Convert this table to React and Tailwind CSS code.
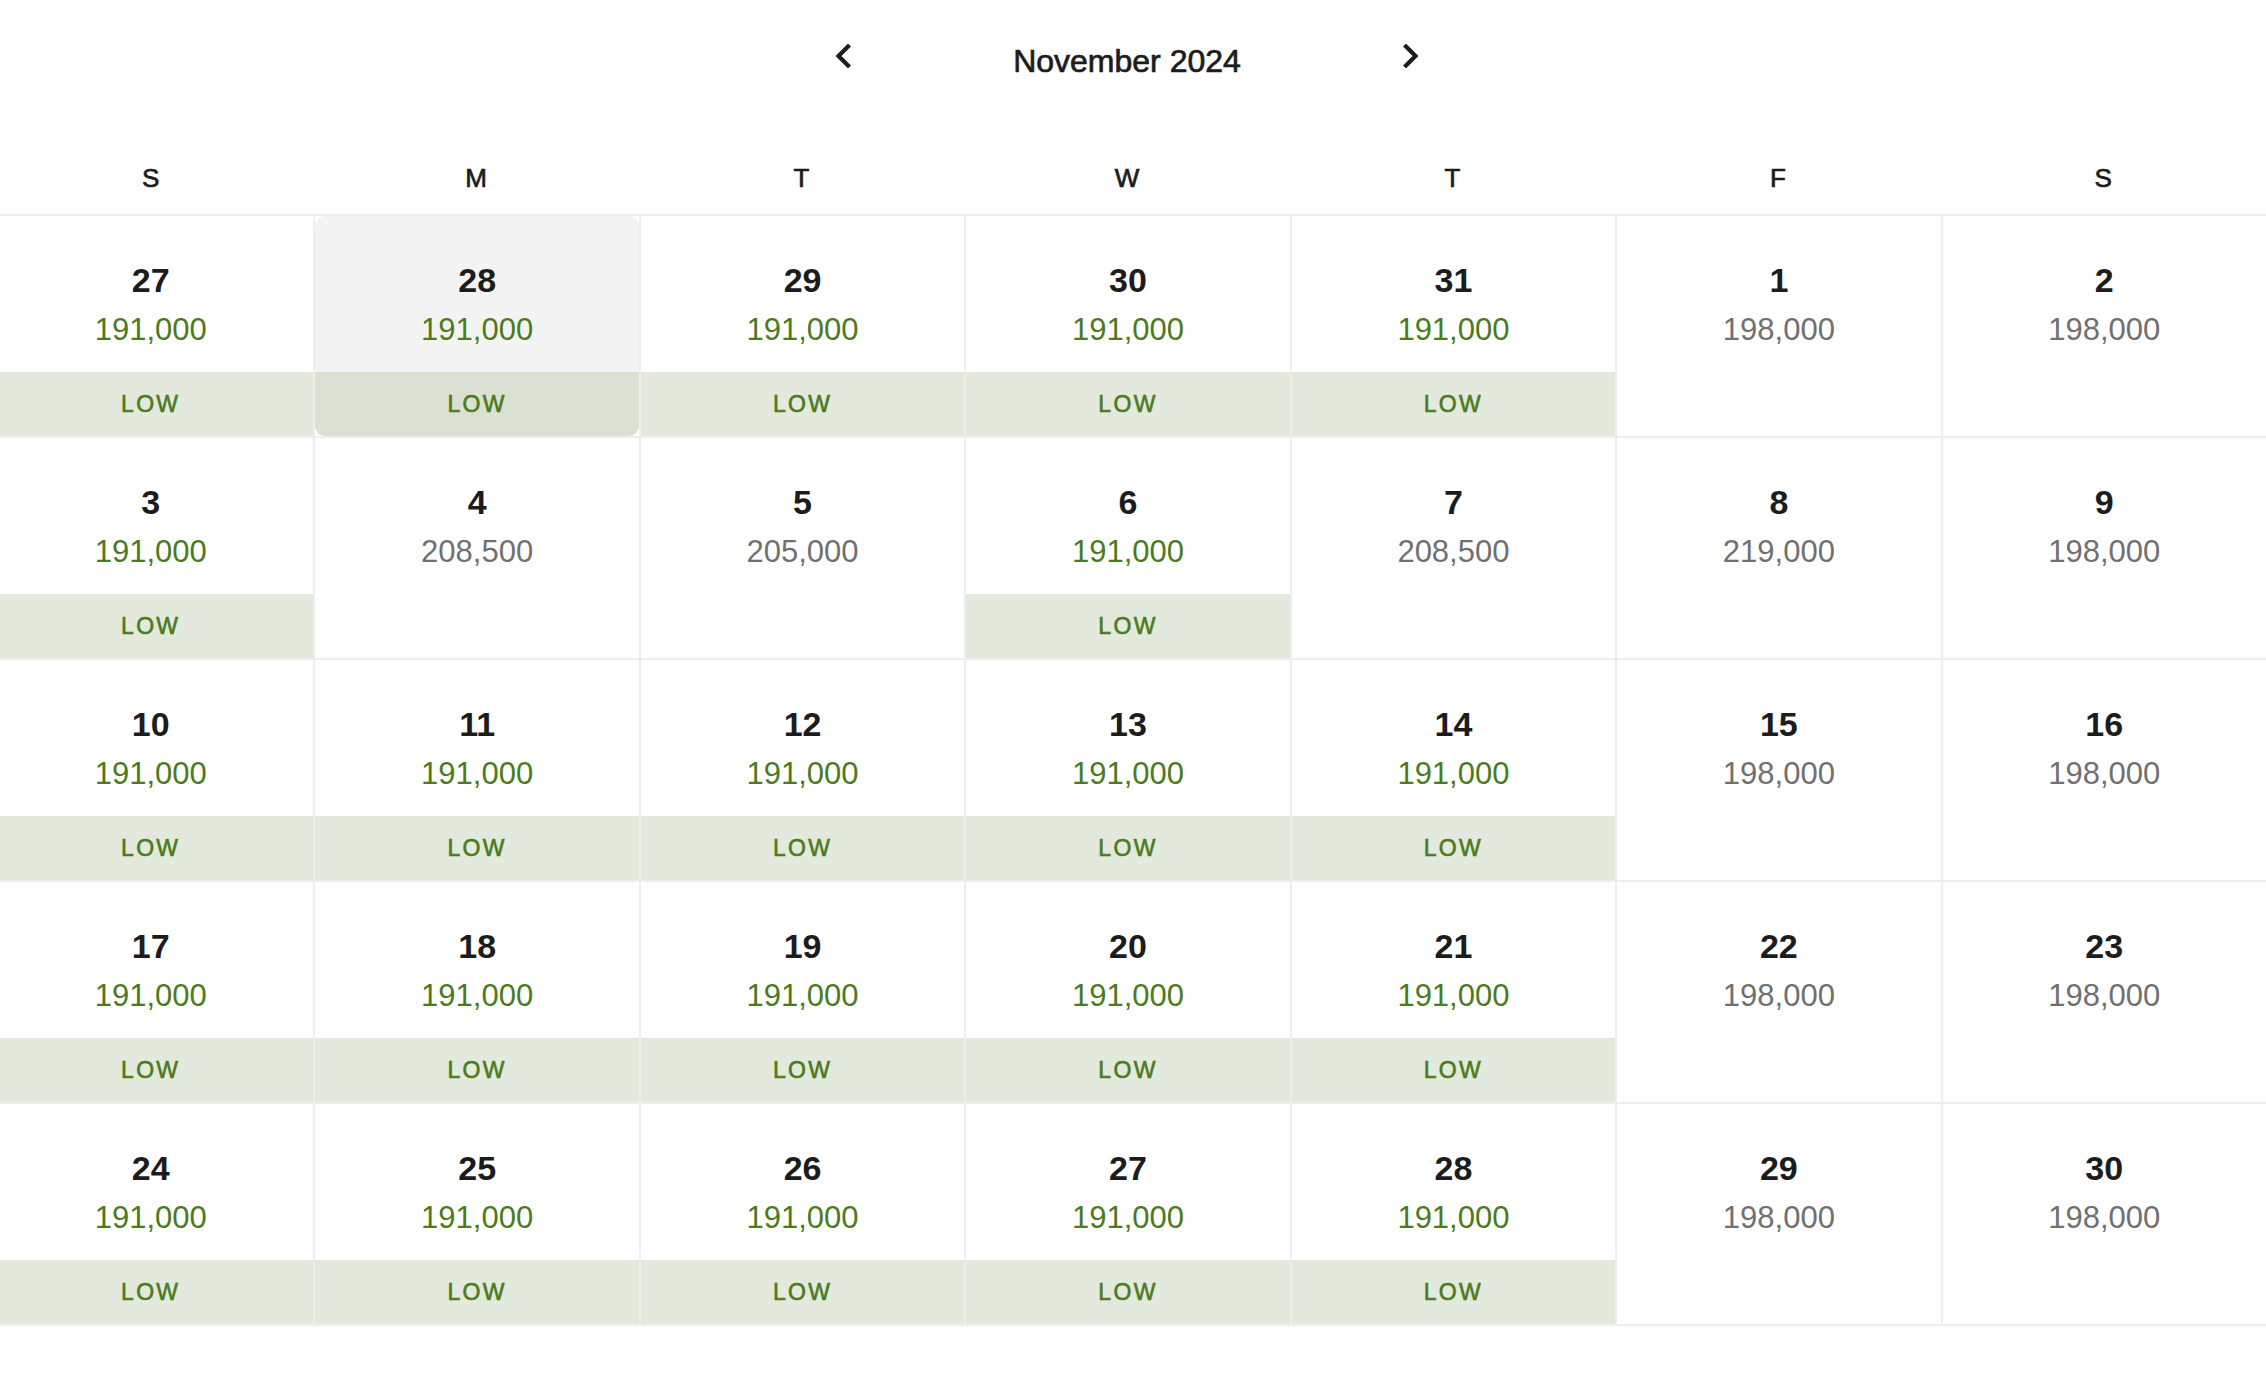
import React from "react";

const DAYS = ["S", "M", "T", "W", "T", "F", "S"];

const LOW = "191,000";

// each week: [day, price, low?]
const WEEKS = [
  [[27, LOW, true], [28, LOW, true], [29, LOW, true], [30, LOW, true], [31, LOW, true], [1, "198,000"], [2, "198,000"]],
  [[3, LOW, true], [4, "208,500"], [5, "205,000"], [6, LOW, true], [7, "208,500"], [8, "219,000"], [9, "198,000"]],
  [[10, LOW, true], [11, LOW, true], [12, LOW, true], [13, LOW, true], [14, LOW, true], [15, "198,000"], [16, "198,000"]],
  [[17, LOW, true], [18, LOW, true], [19, LOW, true], [20, LOW, true], [21, LOW, true], [22, "198,000"], [23, "198,000"]],
  [[24, LOW, true], [25, LOW, true], [26, LOW, true], [27, LOW, true], [28, LOW, true], [29, "198,000"], [30, "198,000"]],
];

const Chevron = ({ dir }) => (
  <svg width="16" height="24" viewBox="0 0 16 24" fill="none" className="block">
    <polyline
      points={dir === "left" ? "13,2.5 3.5,12 13,21.5" : "3,2.5 12.5,12 3,21.5"}
      stroke="#1c1c1c"
      strokeWidth="4.2"
      strokeLinecap="square"
      strokeLinejoin="miter"
    />
  </svg>
);

const DayCell = ({ day, price, low, selected }) => (
  <div
    className={`flex h-[220px] flex-col items-center overflow-hidden pt-[47px] ${
      selected ? "rounded-[10px] bg-[#f3f3f3]" : ""
    }`}
  >
    <div className="text-[34px] font-bold leading-none text-[#1c1c1c]">{day}</div>
    <div
      className={`mt-[17px] text-[31px] leading-none ${
        low ? "text-[#4b7b1d]" : "text-[#707070]"
      }`}
    >
      {price}
    </div>
    {low && (
      <div
        className={`mt-auto flex h-[64px] w-full items-center justify-center text-[23px] leading-none tracking-[0.1em] text-[#4b7b1d] [-webkit-text-stroke:0.6px_#4b7b1d] ${
          selected ? "bg-[#dae1d2]" : "bg-[#e3e9dc]"
        }`}
      >
        LOW
      </div>
    )}
  </div>
);

export default function App() {
  return (
    <div className="min-h-screen overflow-hidden bg-white font-['Liberation_Sans',Arial,sans-serif]">
      <div className="-ml-3 w-[calc(100%+12px)]">
        <div className="flex items-start justify-center gap-[162px] pt-[44px]">
          <button className="block">
            <Chevron dir="left" />
          </button>
          <h1 className="mt-[1px] text-[32px] leading-none text-[#1c1c1c] [-webkit-text-stroke:0.7px_#1c1c1c]">
            November 2024
          </h1>
          <button className="block">
            <Chevron dir="right" />
          </button>
        </div>

        <div className="mt-[88px] grid grid-cols-7 border-b-2 border-[#eeeeee] pb-[23px]">
          {DAYS.map((d, i) => (
            <div
              key={i}
              className="text-center text-[26px] leading-none text-[#1c1c1c] [-webkit-text-stroke:0.7px_#1c1c1c]"
            >
              {d}
            </div>
          ))}
        </div>

        {WEEKS.map((week, w) => (
          <div key={w} className="grid grid-cols-7 border-b-2 border-[#eeeeee]">
            {week.map(([day, price, low], i) => (
              <div key={i} className={i > 0 ? "border-l-2 border-[#eeeeee]" : ""}>
                <DayCell day={day} price={price} low={low} selected={w === 0 && i === 1} />
              </div>
            ))}
          </div>
        ))}
      </div>
    </div>
  );
}
